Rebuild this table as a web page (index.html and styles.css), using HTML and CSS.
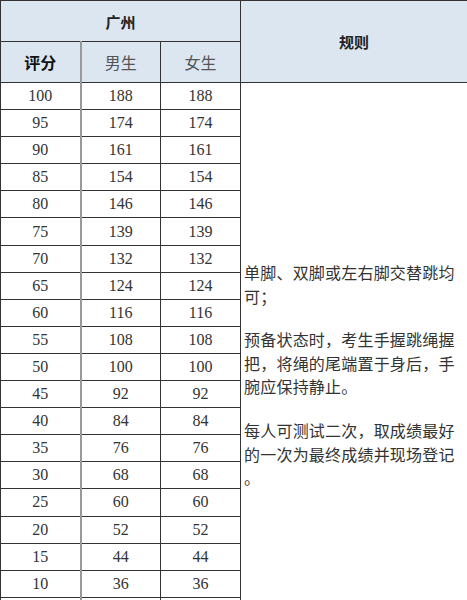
FILE: index.html
```html
<!DOCTYPE html>
<html lang="zh">
<head>
<meta charset="utf-8">
<link rel="stylesheet" href="styles.css">
</head>
<body>
<table class="tbl">
  <colgroup>
    <col class="c1"><col class="c2"><col class="c3"><col class="c4">
  </colgroup>
  <thead>
    <tr class="h1">
      <th colspan="3" class="city">广州</th>
      <th rowspan="2" class="rule-h">规则</th>
    </tr>
    <tr class="h2">
      <th class="score-h">评分</th>
      <th class="sex">男生</th>
      <th class="sex">女生</th>
    </tr>
  </thead>
  <tbody>
    <tr><td class="s">100</td><td>188</td><td>188</td>
      <td rowspan="20" class="rules">
        <p>单脚、双脚或左右脚交替跳均可；</p>
        <p>预备状态时，考生手握跳绳握把，将绳的尾端置于身后，手腕应保持静止。</p>
        <p>每人可测试二次，取成绩最好的一次为最终成绩并现场登记。</p>
      </td></tr>
    <tr><td class="s">95</td><td>174</td><td>174</td></tr>
    <tr><td class="s">90</td><td>161</td><td>161</td></tr>
    <tr><td class="s">85</td><td>154</td><td>154</td></tr>
    <tr><td class="s">80</td><td>146</td><td>146</td></tr>
    <tr><td class="s">75</td><td>139</td><td>139</td></tr>
    <tr><td class="s">70</td><td>132</td><td>132</td></tr>
    <tr><td class="s">65</td><td>124</td><td>124</td></tr>
    <tr><td class="s">60</td><td>116</td><td>116</td></tr>
    <tr><td class="s">55</td><td>108</td><td>108</td></tr>
    <tr><td class="s">50</td><td>100</td><td>100</td></tr>
    <tr><td class="s">45</td><td>92</td><td>92</td></tr>
    <tr><td class="s">40</td><td>84</td><td>84</td></tr>
    <tr><td class="s">35</td><td>76</td><td>76</td></tr>
    <tr><td class="s">30</td><td>68</td><td>68</td></tr>
    <tr><td class="s">25</td><td>60</td><td>60</td></tr>
    <tr><td class="s">20</td><td>52</td><td>52</td></tr>
    <tr><td class="s">15</td><td>44</td><td>44</td></tr>
    <tr><td class="s">10</td><td>36</td><td>36</td></tr>
    <tr><td class="s"></td><td></td><td></td></tr>
  </tbody>
</table>
</body>
</html>
```
FILE: styles.css
```css
html, body {
  margin: 0;
  padding: 0;
  background: #fff;
}
body {
  font-family: "Liberation Serif", "Noto Sans CJK SC", serif;
  color: #222;
  overflow: hidden;
}
.tbl {
  border-collapse: collapse;
  table-layout: fixed;
  width: 467px;
}
.c1, .c2, .c3 { width: 80px; }
.c4 { width: 227px; }
.tbl th, .tbl td {
  border: 1px solid #333;
  padding: 0;
  text-align: center;
  vertical-align: middle;
}
.tbl thead th {
  background: #dce6f1;
  font-family: "Noto Sans CJK SC", sans-serif;
}
.h1 { height: 41px; }
.h2 { height: 41px; }
.city {
  font-size: 15px;
  font-weight: 700;
  color: #222;
}
.rule-h {
  font-size: 15px;
  font-weight: 700;
  color: #222;
}
.score-h {
  font-size: 16px;
  font-weight: 700;
  color: #111;
  border-right: 2px solid #999 !important;
}
.sex {
  font-size: 16px;
  font-weight: 400 !important;
  color: #555;
}
.tbl tbody tr { height: 27.1px; }
.tbl tbody td {
  font-size: 16px;
  color: #333;
  line-height: 20px;
}
.tbl tbody td.s {
  border-right: 2px solid #999;
}
.rules {
  text-align: left !important;
  vertical-align: top !important;
  padding: 0 10px 0 3px !important;
  font-family: "Noto Sans CJK SC", sans-serif;
  color: #333 !important;
}
.rules p {
  margin: 0;
  font-size: 16px;
  line-height: 23.6px;
  letter-spacing: 0.2px;
  line-break: anywhere;
}
.rules p:first-child {
  margin-top: 178px;
}
.rules p + p {
  margin-top: 20px;
}
```
